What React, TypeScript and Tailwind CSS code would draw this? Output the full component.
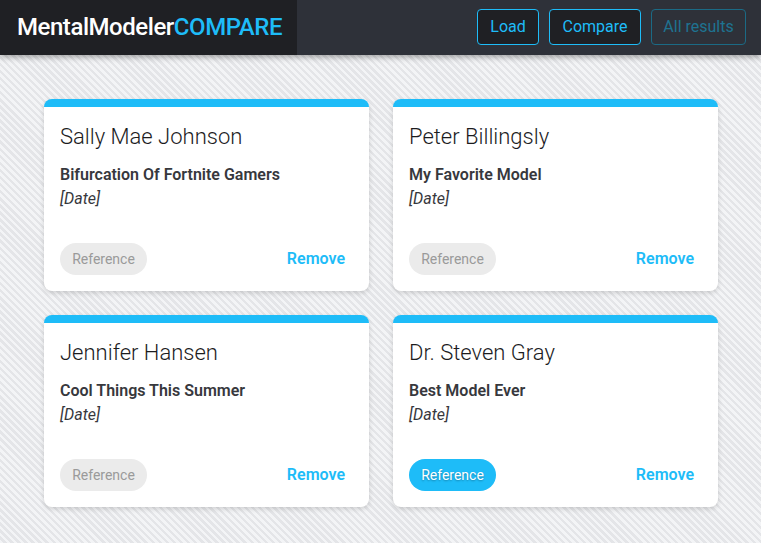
import React from "react";

const cards = [
  { name: "Sally Mae Johnson", title: "Bifurcation Of Fortnite Gamers", active: false },
  { name: "Peter Billingsly", title: "My Favorite Model", active: false },
  { name: "Jennifer Hansen", title: "Cool Things This Summer", active: false },
  { name: "Dr. Steven Gray", title: "Best Model Ever", active: true },
];

export default function App() {
  return (
    <div
      className="min-h-[543px] w-full bg-[repeating-linear-gradient(45deg,#f3f4f6_0px,#f3f4f6_2.5px,#e4e5e8_2.5px,#e4e5e8_5px)]"
      style={{ fontFamily: "Roboto, 'Noto Sans', sans-serif" }}
    >
      <header className="relative z-10 flex h-[55px] items-stretch bg-[#2e3139] shadow-[0_2px_6px_rgba(0,0,0,0.35)]">
        <div className="flex w-[297px] items-center bg-[#1f2024] pb-[1px] pl-[17px] text-[24px] font-medium tracking-[-0.45px]">
          <span className="text-white">MentalModeler</span>
          <span className="text-[#1ebcf8]">COMPARE</span>
        </div>
        <div className="flex flex-1 items-center justify-end gap-[10px] pb-[1px] pr-[15px]">
          <button className="h-[36px] w-[62px] rounded-[4px] border border-[#1ebcf8] bg-[#1f2024] text-[16px] text-[#1ebcf8]">
            Load
          </button>
          <button className="h-[36px] w-[92px] rounded-[4px] border border-[#1ebcf8] bg-[#1f2024] text-[16px] text-[#1ebcf8]">
            Compare
          </button>
          <button className="h-[36px] w-[95px] rounded-[4px] border border-[#1b6a85] bg-transparent text-[16px] text-[#1e7391]">
            All results
          </button>
        </div>
      </header>
      <main className="grid grid-cols-[325px_325px] gap-6 pl-[44px] pt-[44px]">
        {cards.map((c) => (
          <div
            key={c.name}
            className="flex h-[192px] flex-col rounded-lg border-t-8 border-[#1ebcf8] bg-white px-4 pb-4 pt-[14px] shadow-[0_2px_5px_rgba(0,0,0,0.15)]"
          >
            <div className="text-[22px] font-light leading-8 text-[#1c1c1e]">{c.name}</div>
            <div className="mt-[10px] text-[16px] font-semibold leading-6 text-[#37383d]">{c.title}</div>
            <div className="text-[16px] italic leading-6 text-[#37383d]">[Date]</div>
            <div className="mt-auto flex items-center justify-between pr-2">
              <span
                className={
                  c.active
                    ? "flex h-8 w-[87px] items-center justify-center rounded-full bg-[#1ebcf8] text-[14px] text-white [text-shadow:0_1px_2px_rgba(0,0,0,0.3)]"
                    : "flex h-8 w-[87px] items-center justify-center rounded-full bg-[#ebebeb] text-[14px] text-[#9a9a9a]"
                }
              >
                Reference
              </span>
              <span className="text-[16px] font-semibold text-[#1ebcf8]">Remove</span>
            </div>
          </div>
        ))}
      </main>
    </div>
  );
}
